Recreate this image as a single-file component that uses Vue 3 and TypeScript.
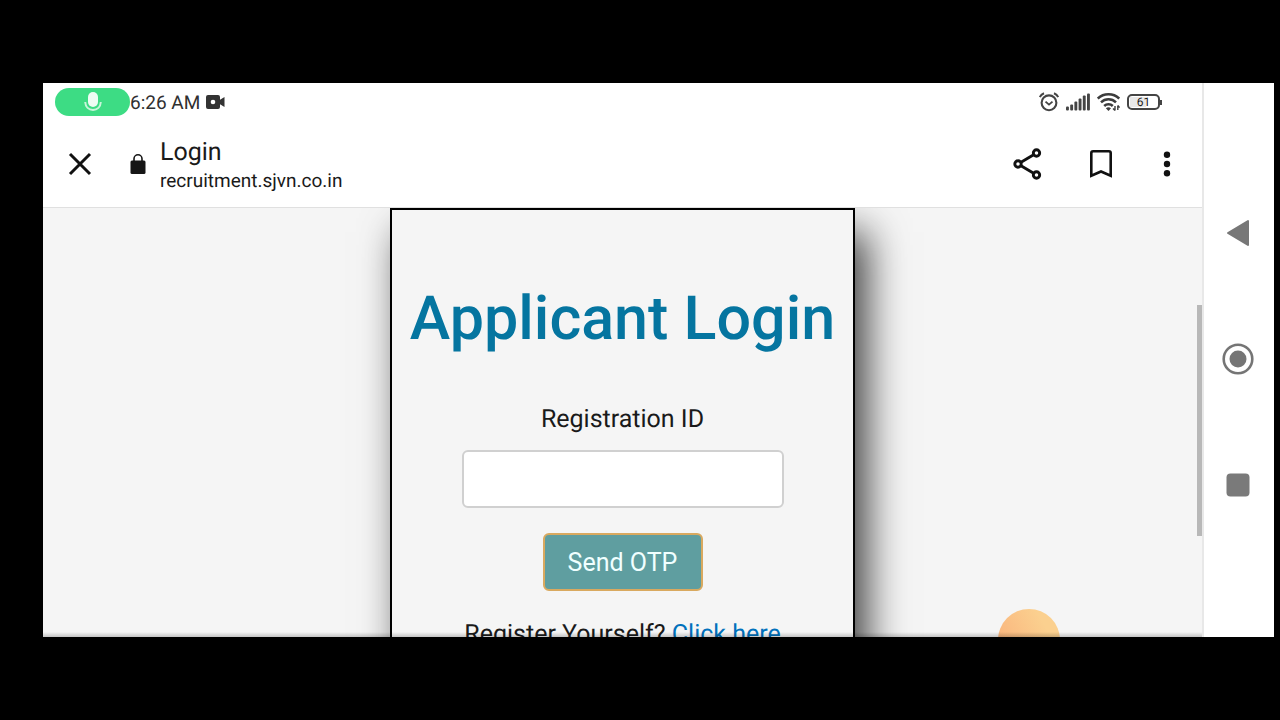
<script setup lang="ts">
import { ref } from 'vue'

const registrationId = ref('')
const battery = 61
const signalBars = [4, 6, 9, 12, 15, 17]
</script>

<template>
  <div class="stage">
    <div class="phone">
      <div class="screen">
        <header class="top">
          <div class="status">
            <span class="mic">
              <svg width="20" height="22" viewBox="0 0 20 22" aria-hidden="true">
                <rect x="5" y="1" width="10" height="15" rx="5" fill="#eefcf3" />
                <path d="M2.200 11c.3 5 3.600 8 7.800 8s7.500-3 7.800-8" fill="none" stroke="#c9f5da" stroke-width="2" />
              </svg>
            </span>
            <span class="clock">6:26 AM</span>
            <svg class="cam" width="19" height="14" viewBox="0 0 19 14" aria-hidden="true">
              <path d="M2 0h10a2 2 0 0 1 2 2v2.800L18.500 2v10L14 9.200V12a2 2 0 0 1-2 2H2a2 2 0 0 1-2-2V2a2 2 0 0 1 2-2z" fill="#333" />
              <circle cx="7" cy="7" r="2.300" fill="#fff" />
            </svg>
            <div class="indicators">
              <svg width="20" height="20" viewBox="0 0 20 20" fill="none" stroke="#444" aria-hidden="true">
                <circle cx="10" cy="10.800" r="7.400" stroke-width="2.100" />
                <path d="M6.500 9.600l3.500 3 3.500-3" stroke-width="1.900" />
                <path d="M.8 5.200C1.500 3.500 3 2.100 5 1.300M19.200 5.200C18.500 3.500 17 2.100 15 1.300" stroke-width="2" />
              </svg>
              <svg width="24" height="18" viewBox="0 0 24 18" aria-hidden="true">
                <rect v-for="(h, i) in signalBars" :key="i" :x="i * 4.200" :y="17.500 - h" width="2.900" :height="h" rx="1" fill="#444" />
              </svg>
              <svg width="23" height="18" viewBox="0 0 23 18" fill="none" stroke="#3c3c3c" stroke-width="2.500" aria-hidden="true">
                <path d="M.8 5.500c6-5.600 15.400-5.600 21.400 0M4 9.300c4.200-4 10.800-4 15 0M7.200 13c2.400-2.400 6.200-2.400 8.600 0" />
                <path d="M11.500 18l-2.700-2.800q2.700-2 5.200 0z" fill="#3c3c3c" stroke="none" />
                <path d="M18 17.500v-4.500M20.800 12.500v4.500M16 15.500l2 2M20.800 12.500l1.800 2" stroke-width="1.400" />
              </svg>
              <span class="battery"><span class="level">{{ battery }}</span></span>
            </div>
          </div>
          <div class="toolbar">
            <button class="icon close" type="button" aria-label="Close">
              <svg width="24" height="24" viewBox="0 0 24 24"><path d="M2 2l20 20M22 2L2 22" stroke="#111" stroke-width="3" /></svg>
            </button>
            <svg class="lock" width="16" height="20" viewBox="0 0 16 20" aria-hidden="true">
              <rect x="0.500" y="6.500" width="15" height="13.500" rx="1.500" fill="#161616" />
              <path d="M4 8V4.800a4 4 0 0 1 8 0V8" fill="none" stroke="#161616" stroke-width="1.600" />
            </svg>
            <div class="site">
              <div class="name">Login</div>
              <div class="url">recruitment.sjvn.co.in</div>
            </div>
            <button class="icon share" type="button" aria-label="Share">
              <svg width="30" height="32" viewBox="0 0 30 32" fill="none" stroke="#111" stroke-width="2.900">
                <path d="M8 14.200l12.200-7.100M8 17.800l12.200 7.100" />
                <circle cx="5" cy="16" r="3.200" /><circle cx="23.500" cy="5" r="3.200" /><circle cx="23.500" cy="27" r="3.200" />
              </svg>
            </button>
            <button class="icon save" type="button" aria-label="Bookmark">
              <svg width="24" height="30" viewBox="0 0 24 30" fill="none" stroke="#111" stroke-width="2.600">
                <path d="M2.300 26.800V4a1.800 1.800 0 0 1 1.800-1.800h15.800A1.800 1.800 0 0 1 21.700 4v22.800L12 22.500z" />
              </svg>
            </button>
            <button class="icon more" type="button" aria-label="More options">
              <svg width="8" height="26" viewBox="0 0 8 26" fill="#111">
                <circle cx="4" cy="3.800" r="3.200" /><circle cx="4" cy="13" r="3.200" /><circle cx="4" cy="22.200" r="3.200" />
              </svg>
            </button>
          </div>
        </header>

        <main class="page">
          <form class="card" @submit.prevent>
            <h1>Applicant Login</h1>
            <label for="reg-id">Registration ID</label>
            <input id="reg-id" v-model="registrationId" type="text" />
            <button class="send" type="submit">Send OTP</button>
            <p class="register">Register Yourself? <a href="#">Click here</a></p>
          </form>
          <div class="bubble"></div>
          <div class="thumb"></div>
        </main>
      </div>

      <nav class="keys" aria-label="System navigation">
        <button class="icon" type="button" aria-label="Back">
          <svg width="32" height="32" viewBox="0 0 32 32"><path d="M6 16L26 4v24z" fill="#777" stroke="#777" stroke-width="2" stroke-linejoin="round" /></svg>
        </button>
        <button class="icon" type="button" aria-label="Home">
          <svg width="32" height="32" viewBox="0 0 32 32"><circle cx="16" cy="16" r="14.300" fill="none" stroke="#757575" stroke-width="2.600" /><circle cx="16" cy="16" r="8.500" fill="#757575" /></svg>
        </button>
        <button class="icon" type="button" aria-label="Recent apps">
          <svg width="32" height="32" viewBox="0 0 32 32"><rect x="4.500" y="4.500" width="23" height="23" rx="4" fill="#7a7a7a" /></svg>
        </button>
      </nav>
    </div>
  </div>
</template>

<style>
body {
  margin: 0;
  background: #000;
}
</style>

<style scoped>
.stage {
  box-sizing: border-box;
  display: flex;
  height: 100vh;
  padding: 83px 6px 83px 43px;
  background: #000;
  color: #1a1a1a;
  font-family: Roboto, "Liberation Sans", sans-serif;
  text-rendering: geometricPrecision;
}
.phone {
  display: flex;
  flex: 1;
  min-width: 0;
  background: #fff;
}
.screen {
  display: flex;
  flex: 1;
  flex-direction: column;
  min-width: 0;
}
.top {
  flex: none;
  border-bottom: 1px solid #e0e0e0;
  background: #fff;
}
.status {
  display: flex;
  align-items: center;
  height: 38px;
  padding: 0 42px 0 12px;
}
.mic {
  display: flex;
  align-items: center;
  justify-content: center;
  width: 75px;
  height: 28px;
  border-radius: 14px;
  background: #3ddc84;
}
.clock {
  padding-top: 1px;
  font-size: 19px;
  line-height: 24px;
  color: #303030;
}
.cam {
  margin-left: 6px;
}
.indicators {
  display: flex;
  align-items: center;
  gap: 7px;
  margin-left: auto;
}
.battery {
  position: relative;
  box-sizing: border-box;
  width: 33px;
  height: 16px;
  padding: 1px;
  border: 2px solid #444;
  border-radius: 5px;
}
.battery::after {
  content: "";
  position: absolute;
  top: 4px;
  right: -4px;
  width: 2px;
  height: 5px;
  background: #444;
}
.level {
  display: block;
  background: linear-gradient(90deg, #e8e8e8 61%, #fff 61%);
  font-size: 12px;
  line-height: 10px;
  text-align: center;
}
.toolbar {
  display: flex;
  align-items: center;
  height: 86px;
  padding: 0 31px 0 25px;
}
.icon {
  display: flex;
  padding: 0;
  border: 0;
  background: none;
}
.lock {
  margin-left: 38px;
}
.site {
  flex: 1;
  margin-left: 14px;
  padding-top: 2px;
}
.name {
  font-size: 25px;
  line-height: 32px;
}
.url {
  font-size: 19px;
  line-height: 24px;
}
.save {
  margin-left: 46px;
}
.more {
  margin-left: 50px;
}
.page {
  position: relative;
  display: flex;
  flex: 1;
  align-items: flex-start;
  justify-content: center;
  min-height: 0;
  overflow: hidden;
  background: #f5f5f5;
}
.page::after {
  content: "";
  position: absolute;
  right: 0;
  bottom: 0;
  left: 0;
  height: 5px;
  background: linear-gradient(transparent, rgba(0, 0, 0, 0.2));
}
.card {
  display: flex;
  flex-direction: column;
  align-items: center;
  box-sizing: border-box;
  width: 465px;
  height: 520px;
  border: 2px solid #000;
  background: #f5f5f5;
  box-shadow: 12px 24px 38px rgba(0, 0, 0, 0.75);
}
h1 {
  margin: 72px 0 0;
  color: #0575a0;
  font-size: 61px;
  font-weight: 500;
  line-height: 72px;
  white-space: nowrap;
}
label {
  margin-top: 50px;
  font-size: 25px;
  line-height: 32px;
}
input {
  box-sizing: border-box;
  width: 322px;
  height: 58px;
  margin-top: 14px;
  padding: 0 16px;
  border: 2px solid #d0d0d0;
  border-radius: 6px;
  background: #fff;
  font: inherit;
  font-size: 25px;
}
.send {
  width: 160px;
  height: 58px;
  margin-top: 25px;
  padding: 0;
  border: 2px solid #d9a95f;
  border-radius: 6px;
  background: #5f9ea0;
  color: #f0ffff;
  font: inherit;
  font-size: 25px;
}
.register {
  margin: 28px 0 0;
  font-size: 25px;
  line-height: 32px;
}
a {
  color: #0071bc;
  text-decoration: none;
}
.bubble {
  position: absolute;
  right: 142px;
  bottom: -34px;
  width: 62px;
  height: 62px;
  border-radius: 50%;
  background: linear-gradient(60deg, #f9ad78, #fbd08f 75%);
}
.thumb {
  position: absolute;
  top: 97px;
  right: 0;
  width: 5px;
  height: 231px;
  background: #b8b8b8;
}
.keys {
  display: flex;
  flex-direction: column;
  align-items: center;
  gap: 94px;
  box-sizing: border-box;
  width: 72px;
  padding: 134px 2px 0 0;
  border-left: 2px solid #e8e8e8;
}
</style>
